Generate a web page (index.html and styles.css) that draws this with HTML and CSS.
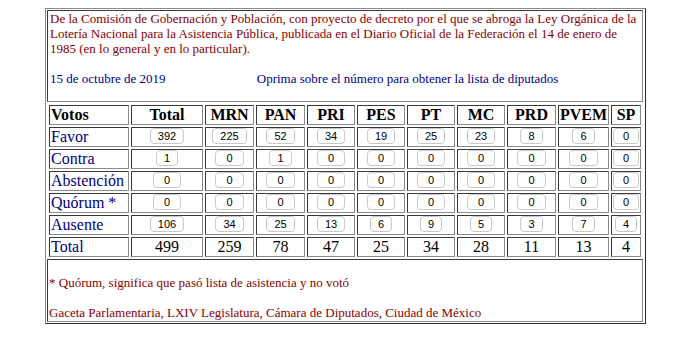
FILE: index.html
```html
<!DOCTYPE html>
<html lang="es">
<head>
<meta charset="utf-8">
<title>Votación</title>
<link rel="stylesheet" href="styles.css">
</head>
<body>
<div class="frame">
  <div class="intro">
    <p class="desc">De la Comisión de Gobernación y Población, con proyecto de decreto por el que se abroga la Ley Orgánica de la Lotería Nacional para la Asistencia Pública, publicada en el Diario Oficial de la Federación el 14 de enero de 1985 (en lo general y en lo particular).</p>
    <div class="date-row">
      <span class="date">15 de octubre de 2019</span>
      <span class="hint">Oprima sobre el número para obtener la lista de diputados</span>
    </div>
  </div>
  <table class="votes">
    <thead>
      <tr>
        <th class="lbl w-votos">Votos</th>
        <th class="w-total">Total</th>
        <th class="w-mrn">MRN</th>
        <th class="w-pan">PAN</th>
        <th class="w-pri">PRI</th>
        <th class="w-pes">PES</th>
        <th class="w-pt">PT</th>
        <th class="w-mc">MC</th>
        <th class="w-prd">PRD</th>
        <th class="w-pvem">PVEM</th>
        <th class="w-sp">SP</th>
      </tr>
    </thead>
    <tbody>
      <tr>
        <td class="lbl">Favor</td>
        <td><button type="button" class="n">392</button></td>
        <td><button type="button" class="n">225</button></td>
        <td><button type="button" class="n">52</button></td>
        <td><button type="button" class="n">34</button></td>
        <td><button type="button" class="n">19</button></td>
        <td><button type="button" class="n">25</button></td>
        <td><button type="button" class="n">23</button></td>
        <td><button type="button" class="n">8</button></td>
        <td><button type="button" class="n">6</button></td>
        <td><button type="button" class="n z">0</button></td>
      </tr>
      <tr>
        <td class="lbl">Contra</td>
        <td><button type="button" class="n">1</button></td>
        <td><button type="button" class="n z">0</button></td>
        <td><button type="button" class="n">1</button></td>
        <td><button type="button" class="n z">0</button></td>
        <td><button type="button" class="n z">0</button></td>
        <td><button type="button" class="n z">0</button></td>
        <td><button type="button" class="n z">0</button></td>
        <td><button type="button" class="n z">0</button></td>
        <td><button type="button" class="n z">0</button></td>
        <td><button type="button" class="n z">0</button></td>
      </tr>
      <tr>
        <td class="lbl">Abstención</td>
        <td><button type="button" class="n z">0</button></td>
        <td><button type="button" class="n z">0</button></td>
        <td><button type="button" class="n z">0</button></td>
        <td><button type="button" class="n z">0</button></td>
        <td><button type="button" class="n z">0</button></td>
        <td><button type="button" class="n z">0</button></td>
        <td><button type="button" class="n z">0</button></td>
        <td><button type="button" class="n z">0</button></td>
        <td><button type="button" class="n z">0</button></td>
        <td><button type="button" class="n z">0</button></td>
      </tr>
      <tr>
        <td class="lbl">Quórum *</td>
        <td><button type="button" class="n z">0</button></td>
        <td><button type="button" class="n z">0</button></td>
        <td><button type="button" class="n z">0</button></td>
        <td><button type="button" class="n z">0</button></td>
        <td><button type="button" class="n z">0</button></td>
        <td><button type="button" class="n z">0</button></td>
        <td><button type="button" class="n z">0</button></td>
        <td><button type="button" class="n z">0</button></td>
        <td><button type="button" class="n z">0</button></td>
        <td><button type="button" class="n z">0</button></td>
      </tr>
      <tr>
        <td class="lbl">Ausente</td>
        <td><button type="button" class="n">106</button></td>
        <td><button type="button" class="n">34</button></td>
        <td><button type="button" class="n">25</button></td>
        <td><button type="button" class="n">13</button></td>
        <td><button type="button" class="n">6</button></td>
        <td><button type="button" class="n">9</button></td>
        <td><button type="button" class="n">5</button></td>
        <td><button type="button" class="n">3</button></td>
        <td><button type="button" class="n">7</button></td>
        <td><button type="button" class="n">4</button></td>
      </tr>
      <tr class="sum">
        <td class="lbl">Total</td>
        <td>499</td>
        <td>259</td>
        <td>78</td>
        <td>47</td>
        <td>25</td>
        <td>34</td>
        <td>28</td>
        <td>11</td>
        <td>13</td>
        <td>4</td>
      </tr>
    </tbody>
  </table>
  <div class="note">
    <p class="note-line">* Quórum, significa que pasó lista de asistencia y no votó</p>
    <p class="note-line">Gaceta Parlamentaria, LXIV Legislatura, Cámara de Diputados, Ciudad de México</p>
  </div>
</div>
</body>
</html>
```

FILE: styles.css
```css
html, body {
  background: #ffffff;
}

body {
  margin: 8px;
  font-family: "Liberation Serif", "Times New Roman", serif;
  color: #000;
}

.frame {
  margin-left: 37px;
  width: 596px;
  padding: 1px 2px 1px 1px;
  border-style: solid;
  border-width: 1px;
  border-color: #8a8a8a #2a2a2a #2a2a2a #8a8a8a;
  display: flex;
  flex-direction: column;
}

.intro,
.note {
  border-style: solid;
  border-width: 1px;
  border-color: #3a3a3a #8a8a8a #8a8a8a #3a3a3a;
  font-size: 13px;
  line-height: 15px;
  color: #880000;
}

.intro {
  padding: 0 2px 15px 2px;
}

.desc {
  margin: 0;
}

.date-row {
  margin-top: 15px;
  display: flex;
  color: #000080;
}

.date {
  width: 125px;
  flex: none;
}

.hint {
  flex: 1;
  text-align: center;
}

.votes {
  margin-top: 1px;
  width: 596px;
  table-layout: fixed;
  border-collapse: separate;
  border-spacing: 2px;
  font-size: 16px;
}

.votes th,
.votes td {
  height: 18px;
  line-height: 18px;
  padding: 0;
  border-style: solid;
  border-width: 1px;
  border-color: #3a3a3a #8a8a8a #8a8a8a #3a3a3a;
  text-align: center;
  vertical-align: top;
  white-space: nowrap;
  overflow: hidden;
}

.votes th {
  font-weight: bold;
}

.votes .lbl {
  text-align: left;
  padding-left: 1px;
  color: #000080;
}

.votes th.lbl {
  color: #000;
}

.w-votos { width: 77px; }
.w-total { width: 70px; }
.w-mrn { width: 47px; }
.w-pan { width: 47px; }
.w-pri { width: 46px; }
.w-pes { width: 46px; }
.w-pt { width: 46px; }
.w-mc { width: 46px; }
.w-prd { width: 47px; }
.w-pvem { width: 49px; }
.w-sp { width: 28px; }

.n {
  display: inline-block;
  box-sizing: border-box;
  height: 16px;
  margin: 0;
  padding: 0 7px;
  border: 1px solid #c9c9c9;
  border-radius: 4px;
  background: #fff;
  color: #000;
  font-family: "Liberation Sans", Arial, sans-serif;
  font-size: 11px;
  line-height: 14px;
  vertical-align: top;
}

.n.z {
  padding: 0 10px;
}

.w-sp ~ th {
  width: auto;
}

.votes td:last-child .n.z {
  padding: 0 9px;
}

.sum td {
  color: #000;
}

.sum td.lbl {
  color: #000080;
}

.note {
  padding: 15px 0 1px 1px;
}

.note-line {
  margin: 0;
}

.note-line + .note-line {
  margin-top: 15px;
}
```
